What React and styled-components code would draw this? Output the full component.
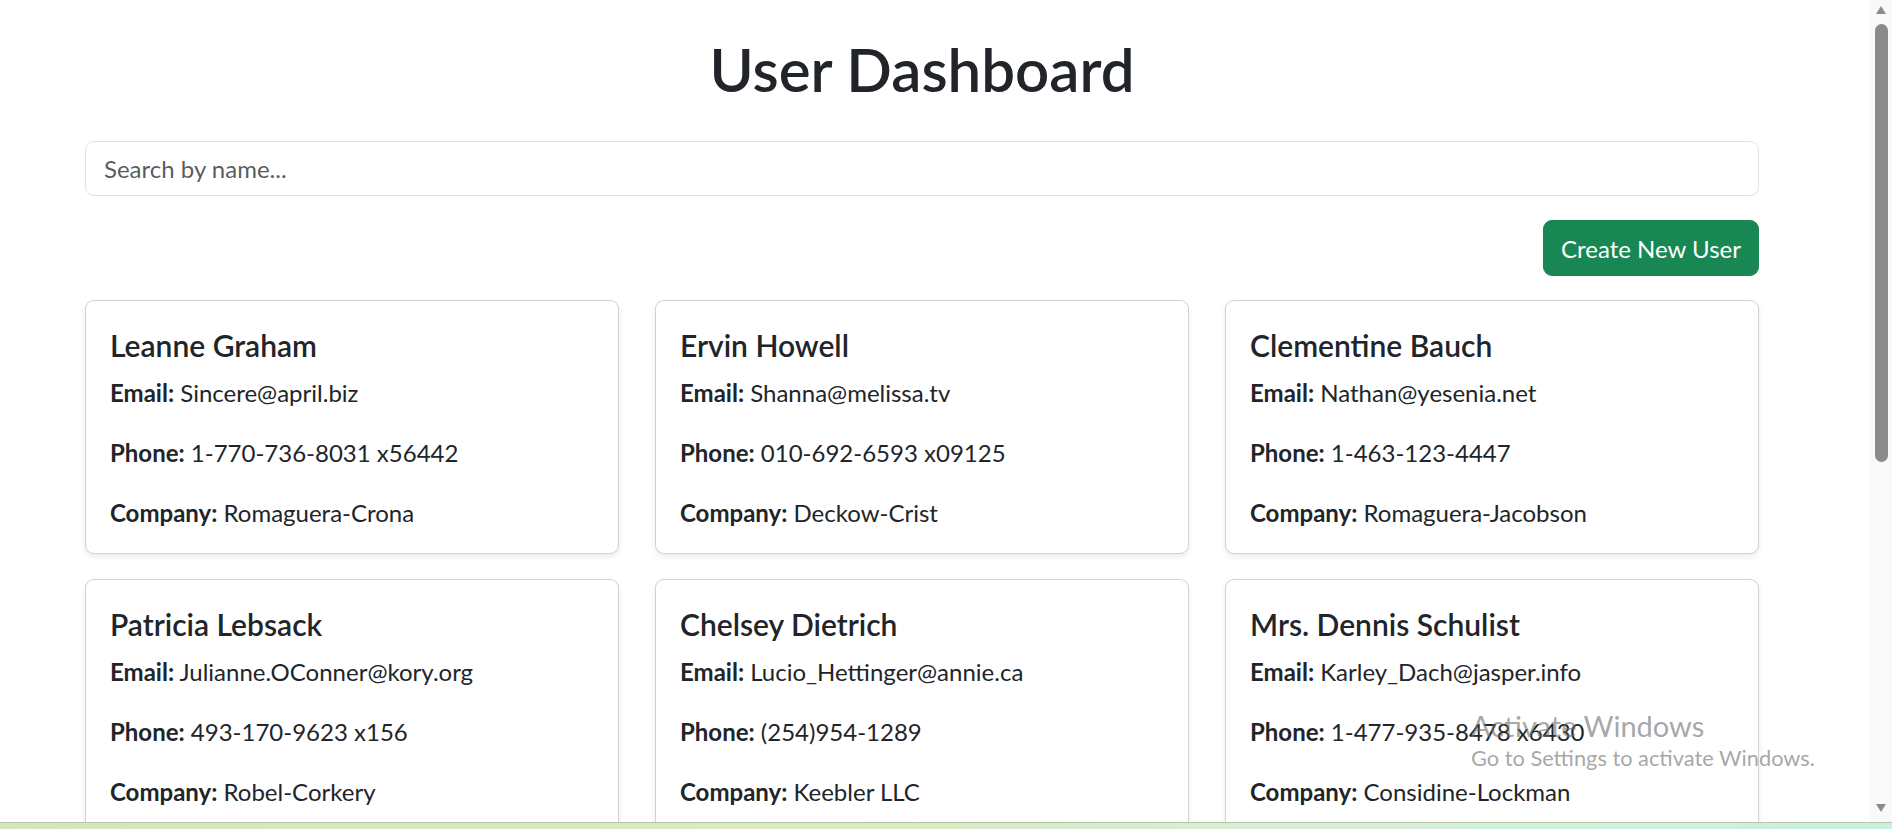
import React, { useState } from "react";
import styled, { createGlobalStyle } from "styled-components";

const GlobalStyle = createGlobalStyle`
  html, body {
    margin: 0;
    padding: 0;
    overflow: hidden;
    background: #ffffff;
  }
  body {
    font-family: Lato, "Noto Sans", "Liberation Sans", sans-serif;
    color: #212529;
  }
  * {
    box-sizing: border-box;
  }
`;

const Screen = styled.div`
  height: 829px;
  display: flex;
  flex-direction: column;
`;

const Viewport = styled.div`
  flex: 1;
  min-height: 0;
  display: flex;
`;

const Page = styled.div`
  flex: 1;
  position: relative;
  overflow: hidden;
`;

const Container = styled.div`
  width: 1674px;
  margin-left: 85px;
  padding-top: 33px;
`;

const Title = styled.h1`
  margin: 0 0 36px;
  font-size: 60px;
  line-height: 72px;
  font-weight: 600;
  text-align: center;
  color: #212529;
`;

const SearchInput = styled.input`
  display: block;
  width: 100%;
  height: 55px;
  margin: 0 0 24px;
  padding: 0 18px;
  font-family: inherit;
  font-size: 24px;
  color: #212529;
  background: #fff;
  border: 1px solid #dee2e6;
  border-radius: 9px;
  outline: none;

  &::placeholder {
    color: rgba(33, 37, 41, 0.75);
  }
`;

const Actions = styled.div`
  display: flex;
  justify-content: flex-end;
  margin-bottom: 24px;
`;

const CreateButton = styled.button`
  height: 56px;
  padding: 0 17px;
  font-family: inherit;
  font-size: 24px;
  color: #fff;
  background: #198754;
  border: 1px solid #198754;
  border-radius: 9px;
  cursor: pointer;
`;

const Grid = styled.div`
  display: grid;
  grid-template-columns: repeat(3, 1fr);
  column-gap: 36px;
  row-gap: 25px;
`;

const Card = styled.div`
  padding: 26px 24px 22px;
  background: #fff;
  border: 1px solid rgba(0, 0, 0, 0.175);
  border-radius: 9px;
  box-shadow: 0 3px 6px rgba(0, 0, 0, 0.075);
`;

const CardTitle = styled.h5`
  margin: 0 0 12px;
  font-size: 30px;
  line-height: 36px;
  font-weight: 600;
`;

const Field = styled.p`
  margin: 0 0 24px;
  font-size: 24px;
  line-height: 36px;

  &:last-child {
    margin-bottom: 0;
  }

  strong {
    font-weight: 700;
  }
`;

const Watermark = styled.div`
  position: absolute;
  left: 1471px;
  top: 708px;
  color: rgba(110, 110, 110, 0.62);
  pointer-events: none;
`;

const WatermarkTitle = styled.div`
  font-size: 29px;
  line-height: 36px;
`;

const WatermarkText = styled.div`
  font-size: 21.8px;
  line-height: 28px;
`;

const Scrollbar = styled.div`
  width: 22px;
  background: #f9f9f9;
  display: flex;
  flex-direction: column;
  align-items: center;
  padding: 4px 0;
`;

const Arrow = styled.div`
  width: 0;
  height: 0;
  border-left: 5px solid transparent;
  border-right: 5px solid transparent;
  ${({ $down }) =>
    $down ? "border-top: 8px solid #8b8b8b;" : "border-bottom: 8px solid #8b8b8b;"}
  margin: ${({ $down }) => ($down ? "auto 0 6px" : "2px 0 0")};
`;

const Thumb = styled.div`
  width: 13px;
  height: 438px;
  margin-top: 10px;
  background: #8b8b8b;
  border-radius: 7px;
`;

const Taskbar = styled.div`
  height: 7px;
  border-top: 1px solid #b8c7a3;
  background: linear-gradient(90deg, #d4e6bb 0%, #dbeac6 45%, #d6eedb 75%, #c9efe6 100%);
`;

const users = [
  { name: "Leanne Graham", email: "Sincere@april.biz", phone: "1-770-736-8031 x56442", company: "Romaguera-Crona" },
  { name: "Ervin Howell", email: "Shanna@melissa.tv", phone: "010-692-6593 x09125", company: "Deckow-Crist" },
  { name: "Clementine Bauch", email: "Nathan@yesenia.net", phone: "1-463-123-4447", company: "Romaguera-Jacobson" },
  { name: "Patricia Lebsack", email: "Julianne.OConner@kory.org", phone: "493-170-9623 x156", company: "Robel-Corkery" },
  { name: "Chelsey Dietrich", email: "Lucio_Hettinger@annie.ca", phone: "(254)954-1289", company: "Keebler LLC" },
  { name: "Mrs. Dennis Schulist", email: "Karley_Dach@jasper.info", phone: "1-477-935-8478 x6430", company: "Considine-Lockman" },
  { name: "Kurtis Weissnat", email: "Telly.Hoeger@billy.biz", phone: "210.067.6132", company: "Johns Group" },
  { name: "Nicholas Runolfsdottir V", email: "Sherwood@rosamond.me", phone: "586.493.6943 x140", company: "Abernathy Group" },
  { name: "Glenna Reichert", email: "Chaim_McDermott@dana.io", phone: "(775)976-6794 x41206", company: "Yost and Sons" },
  { name: "Clementina DuBuque", email: "Rey.Padberg@karina.biz", phone: "024-648-3804", company: "Hoeger LLC" },
];

const UserCard = ({ user }) => (
  <Card>
    <CardTitle>{user.name}</CardTitle>
    <Field>
      <strong>Email:</strong> {user.email}
    </Field>
    <Field>
      <strong>Phone:</strong> {user.phone}
    </Field>
    <Field>
      <strong>Company:</strong> {user.company}
    </Field>
  </Card>
);

const App = () => {
  const [search, setSearch] = useState("");

  const filtered = users.filter((u) =>
    u.name.toLowerCase().includes(search.toLowerCase())
  );

  return (
    <Screen>
      <GlobalStyle />
      <Viewport>
        <Page>
          <Container>
            <Title>User Dashboard</Title>
            <SearchInput
              placeholder="Search by name..."
              value={search}
              onChange={(e) => setSearch(e.target.value)}
            />
            <Actions>
              <CreateButton>Create New User</CreateButton>
            </Actions>
            <Grid>
              {filtered.map((user) => (
                <UserCard key={user.email} user={user} />
              ))}
            </Grid>
          </Container>
          <Watermark>
            <WatermarkTitle>Activate Windows</WatermarkTitle>
            <WatermarkText>Go to Settings to activate Windows.</WatermarkText>
          </Watermark>
        </Page>
        <Scrollbar>
          <Arrow />
          <Thumb />
          <Arrow $down />
        </Scrollbar>
      </Viewport>
      <Taskbar />
    </Screen>
  );
};

export default App;
